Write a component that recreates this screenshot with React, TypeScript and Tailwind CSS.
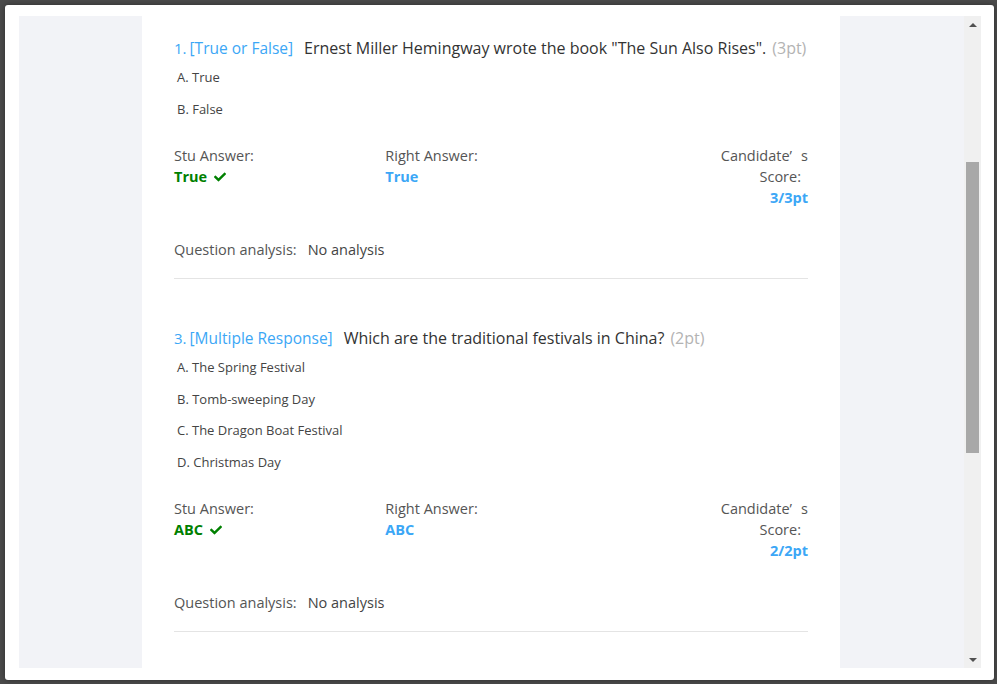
import React from "react";
import { FaCheck } from "react-icons/fa";

type Question = {
  no: number;
  kind: string;
  title: string;
  points: number;
  options: string[];
  stuAnswer: string;
  rightAnswer: string;
  score: string;
};

const questions: Question[] = [
  {
    no: 1,
    kind: "True or False",
    title: 'Ernest Miller Hemingway wrote the book "The Sun Also Rises".',
    points: 3,
    options: ["A. True", "B. False"],
    stuAnswer: "True",
    rightAnswer: "True",
    score: "3/3pt",
  },
  {
    no: 3,
    kind: "Multiple Response",
    title: "Which are the traditional festivals in China?",
    points: 2,
    options: [
      "A. The Spring Festival",
      "B. Tomb-sweeping Day",
      "C. The Dragon Boat Festival",
      "D. Christmas Day",
    ],
    stuAnswer: "ABC",
    rightAnswer: "ABC",
    score: "2/2pt",
  },
];

const QuestionBlock = ({ q, first }: { q: Question; first: boolean }) => {
  return (
    <div className={first ? "pt-[21px]" : "pt-[48px]"}>
      <div className="flex items-baseline text-[16px] leading-[22px] text-[#333]">
        <span className="text-[15px] text-[#3ca7f6]">{q.no}.</span>
        <span className="ml-[3px] text-[15.5px] text-[#3ca7f6]">[{q.kind}]</span>
        <span className="ml-[11px]">{q.title}</span>
        <span className="ml-[6px] text-[#b3b3b3]">({q.points}pt)</span>
      </div>
      <div className="mt-[3px]">
        {q.options.map((opt) => (
          <div key={opt} className="pl-[3px] text-[13px] leading-[31.5px] text-[#444]">
            {opt}
          </div>
        ))}
      </div>
      <div className="mt-[20px] grid grid-cols-3 text-[14.5px] leading-[21px] text-[#555]">
        <div>
          <div>Stu Answer:</div>
          <div className="flex items-center gap-[7px] font-bold text-[#008000]">
            {q.stuAnswer}
            <FaCheck className="h-[12px] w-[12px]" />
          </div>
        </div>
        <div>
          <div>Right Answer:</div>
          <div className="font-bold text-[#3ca7f6]">{q.rightAnswer}</div>
        </div>
        <div className="text-right">
          <div>
            Candidate’<span className="inline-block w-[9px]" />s
          </div>
          <div className="pr-[7px]">Score:</div>
          <div className="font-bold text-[#3ca7f6]">{q.score}</div>
        </div>
      </div>
      <div className="mt-[31px] flex text-[14.5px] leading-[21px] text-[#555]">
        <span>Question analysis:</span>
        <span className="ml-[11px] text-[#444]">No analysis</span>
      </div>
      <div className="mt-[18px] border-b border-[#e4e4e4]" />
    </div>
  );
};

const Scrollbar = () => (
  <div className="flex w-[17px] shrink-0 flex-col items-center bg-[#f0f0f0]">
    <div className="flex h-[17px] w-full items-center justify-center">
      <div className="h-0 w-0 border-x-[4px] border-b-[4px] border-x-transparent border-b-[#505050]" />
    </div>
    <div className="mt-[129px] h-[291px] w-[13px] bg-[#a8a8a8]" />
    <div className="flex-1" />
    <div className="flex h-[17px] w-full items-center justify-center">
      <div className="h-0 w-0 border-x-[4px] border-t-[4px] border-x-transparent border-t-[#505050]" />
    </div>
  </div>
);

export default function App() {
  return (
    <div className="h-[684px] w-full overflow-hidden bg-[#4b4b4b] pl-[5px] pt-[5px] font-['Open_Sans','Noto_Sans',sans-serif]">
      <div className="flex h-[675px] w-[989px] rounded-[3px] bg-white pb-[12px] pl-[14px] pr-[13px] pt-[11px] shadow-[0_0_6px_rgba(0,0,0,0.4)]">
        <div className="flex h-[652px] flex-1 overflow-hidden bg-[#f2f3f7]">
          <div className="ml-[123px] h-full w-[698px] shrink-0 bg-white px-[32px]">
            {questions.map((q, i) => (
              <QuestionBlock key={q.no} q={q} first={i === 0} />
            ))}
          </div>
        </div>
        <Scrollbar />
      </div>
    </div>
  );
}
